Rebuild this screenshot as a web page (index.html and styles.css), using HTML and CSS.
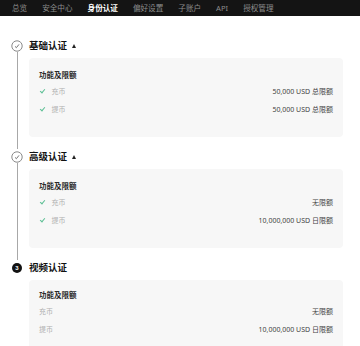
FILE: index.html
```html
<!DOCTYPE html>
<html>
	<head>
		<meta charset="UTF-8">
		<title>身份认证</title>
		<link rel="stylesheet" href="styles.css">
	</head>
	<body>
		<div class="nav">
			<a href="###">总览</a>
			<a href="###">安全中心</a>
			<a href="###" class="active">身份认证</a>
			<a href="###">偏好设置</a>
			<a href="###">子账户</a>
			<a href="###">API</a>
			<a href="###">授权管理</a>
		</div>

		<div class="steps">
			<!-- 基础认证 -->
			<div class="step">
				<div class="rail">
					<svg class="dot" width="12" height="12" viewBox="0 0 12 12">
						<circle cx="6" cy="6" r="5.2" fill="#fff" stroke="#8a8a8a" stroke-width="1"/>
						<path d="M4 6.4 L5.4 7.7 L8 4.4" fill="none" stroke="#666" stroke-width="0.9"/>
					</svg>
					<div class="line"></div>
				</div>
				<div class="body">
					<div class="title">基础认证<i class="arrow"></i></div>
					<div class="card">
						<div class="card-head">功能及限额</div>
						<div class="row">
							<span class="label"><i class="check"></i>充币</span>
							<span class="value">50,000 USD 总限额</span>
						</div>
						<div class="row">
							<span class="label"><i class="check"></i>提币</span>
							<span class="value">50,000 USD 总限额</span>
						</div>
					</div>
				</div>
			</div>

			<!-- 高级认证 -->
			<div class="step">
				<div class="rail">
					<svg class="dot" width="12" height="12" viewBox="0 0 12 12">
						<circle cx="6" cy="6" r="5.2" fill="#fff" stroke="#8a8a8a" stroke-width="1"/>
						<path d="M4 6.4 L5.4 7.7 L8 4.4" fill="none" stroke="#666" stroke-width="0.9"/>
					</svg>
					<div class="line"></div>
				</div>
				<div class="body">
					<div class="title">高级认证<i class="arrow"></i></div>
					<div class="card">
						<div class="card-head">功能及限额</div>
						<div class="row">
							<span class="label"><i class="check"></i>充币</span>
							<span class="value">无限额</span>
						</div>
						<div class="row">
							<span class="label"><i class="check"></i>提币</span>
							<span class="value">10,000,000 USD 日限额</span>
						</div>
					</div>
				</div>
			</div>

			<!-- 视频认证 -->
			<div class="step last">
				<div class="rail">
					<span class="num">3</span>
				</div>
				<div class="body">
					<div class="title">视频认证</div>
					<div class="card">
						<div class="card-head">功能及限额</div>
						<div class="row">
							<span class="label">充币</span>
							<span class="value">无限额</span>
						</div>
						<div class="row">
							<span class="label">提币</span>
							<span class="value">10,000,000 USD 日限额</span>
						</div>
					</div>
				</div>
			</div>
		</div>
	</body>
</html>
```

FILE: styles.css
```css
*{
	margin: 0;
	padding: 0;
}
html, body{
	overflow: hidden;
}
body{
	background: #fff;
	font-family: "Noto Sans", "Noto Sans CJK SC", sans-serif;
	color: #121212;
}
a{
	text-decoration: none;
}
.nav{
	height: 16px;
	background: #141414;
	display: flex;
	align-items: center;
	gap: 15px;
	padding-left: 12px;
}
.nav a{
	font-size: 7.6px;
	line-height: 16px;
	color: #8c8c8c;
}
.nav a.active{
	color: #fff;
	font-weight: bold;
}

.steps{
	padding: 22px 17px 0 11px;
}
.step{
	display: flex;
}
.rail{
	width: 12px;
	display: flex;
	flex-direction: column;
	align-items: center;
	padding-top: 2px;
}
.dot{
	display: block;
	flex: none;
}
.line{
	flex: 1;
	width: 1px;
	background: #a8a8a8;
}
.num{
	width: 10px;
	height: 10px;
	border-radius: 50%;
	background: #121212;
	color: #fff;
	font-size: 6px;
	line-height: 10px;
	text-align: center;
	font-weight: bold;
	font-family: "Liberation Sans", sans-serif;
	margin-top: 1px;
}
.body{
	flex: 1;
	margin-left: 6px;
	padding-bottom: 12px;
}
.last .body{
	padding-bottom: 0;
}
.title{
	height: 16px;
	line-height: 16px;
	font-size: 9.5px;
	font-weight: bold;
	display: flex;
	align-items: center;
	margin-bottom: 4px;
}
.arrow{
	width: 0;
	height: 0;
	border-left: 2.5px solid transparent;
	border-right: 2.5px solid transparent;
	border-bottom: 4px solid #222;
	margin-left: 5px;
}
.card{
	background: #f7f7f7;
	border-radius: 4px;
	padding: 10px 10px 19px 10px;
}
.last .card{
	padding-top: 8px;
	padding-bottom: 11px;
}
.card-head{
	font-size: 7.5px;
	font-weight: bold;
	line-height: 14px;
	color: #2a2a2a;
}
.row{
	display: flex;
	justify-content: space-between;
	align-items: center;
	height: 18px;
	font-size: 7px;
}
.label{
	color: #b0b0b0;
	display: flex;
	align-items: center;
}
.check{
	width: 2px;
	height: 4px;
	border-right: 1.1px solid #5cbf94;
	border-bottom: 1.1px solid #5cbf94;
	transform: rotate(40deg);
	margin: -2px 8px 0 1.5px;
}
.value{
	color: #444;
}
```
